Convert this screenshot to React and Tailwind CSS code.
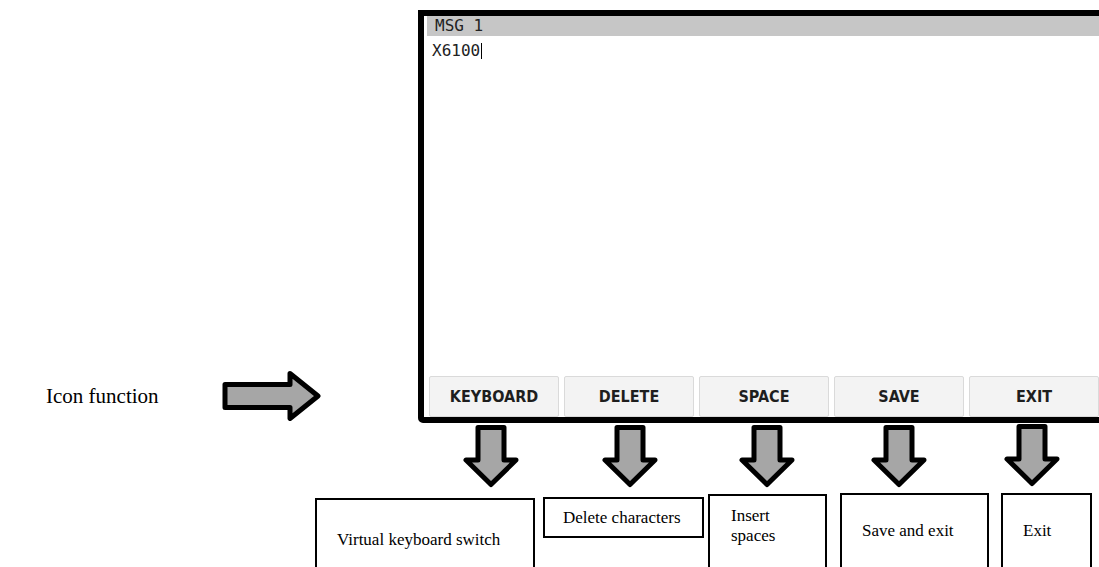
import React from "react";

function DownArrow({ className = "" }) {
  return (
    <svg width="60" height="63" viewBox="0 0 60 63" className={className}>
      <polygon
        points="17,2.5 43,2.5 43,35 55,35 30,59.5 5,35 17,35"
        fill="#a6a6a6"
        stroke="#000"
        strokeWidth="5"
        strokeLinejoin="round"
      />
    </svg>
  );
}

function RightArrow() {
  return (
    <svg width="100" height="50" viewBox="0 0 100 50">
      <polygon
        points="3,13.5 68,13.5 68,2.5 96,25 68,47.5 68,36.5 3,36.5"
        fill="#a6a6a6"
        stroke="#000"
        strokeWidth="5"
        strokeLinejoin="round"
      />
    </svg>
  );
}

const buttons = ["KEYBOARD", "DELETE", "SPACE", "SAVE", "EXIT"];

export default function App() {
  return (
    <div className="w-[1099px] h-[567px] overflow-hidden bg-white font-['Liberation_Serif',serif] text-black">
      {/* top area */}
      <div className="flex h-[423px]">
        <div className="w-[418px] shrink-0 flex items-end pb-[2px]">
          <div className="flex items-center">
            <span className="ml-[46px] text-[21px] leading-[24px]">Icon function</span>
            <span className="ml-[63px]">
              <RightArrow />
            </span>
          </div>
        </div>
        <div className="mt-[10px] w-[690px] h-[413px] shrink-0 border-[6px] border-black rounded-bl-[5px] flex flex-col">
          <div className="ml-[3px] h-[20px] bg-[#c6c6c6] pl-[8px] font-['DejaVu_Sans_Mono',monospace] text-[16px] leading-[20px] text-[#222] whitespace-pre">
            MSG 1
          </div>
          <div className="mt-[5px] pl-[8px] h-[20px] flex items-center font-['DejaVu_Sans_Mono',monospace] text-[16px] leading-[20px] text-[#222]">
            <span>X6100</span>
            <span className="ml-[1px] w-px h-[16px] bg-black" />
          </div>
          <div className="mt-auto flex gap-[5px] pl-[5px] h-[41px]">
            {buttons.map((b) => (
              <div
                key={b}
                className="w-[130px] shrink-0 bg-[#f3f3f3] border border-[#dadada] rounded-[2px] flex items-center justify-center font-['DejaVu_Sans_Condensed','DejaVu_Sans',sans-serif] font-bold text-[16px] text-[#1e1e1e]"
              >
                {b}
              </div>
            ))}
          </div>
        </div>
      </div>

      {/* arrows row */}
      <div className="flex h-[64px] items-start">
        <DownArrow className="ml-[461px] mt-[2px] shrink-0" />
        <DownArrow className="ml-[79px] mt-[2px] shrink-0" />
        <DownArrow className="ml-[77px] mt-[2px] shrink-0" />
        <DownArrow className="ml-[72px] mt-[2px] shrink-0" />
        <DownArrow className="ml-[73px] mt-[1px] shrink-0" />
      </div>

      {/* description boxes */}
      <div className="flex items-start text-[17px] leading-[20px]">
        <div className="ml-[315px] mt-[11px] w-[220px] h-[90px] shrink-0 border-2 border-black pl-[20px] pt-[30px]">
          Virtual keyboard switch
        </div>
        <div className="ml-[8px] mt-[10px] w-[161px] h-[41px] shrink-0 border-2 border-black pl-[18px] pt-[9px]">
          Delete characters
        </div>
        <div className="ml-[4px] mt-[7px] w-[119px] h-[90px] shrink-0 border-2 border-black pl-[21px] pt-[10px]">
          Insert
          <br />
          spaces
        </div>
        <div className="ml-[13px] mt-[6px] w-[149px] h-[90px] shrink-0 border-2 border-black pl-[20px] pt-[26px]">
          Save and exit
        </div>
        <div className="ml-[12px] mt-[6px] w-[91px] h-[90px] shrink-0 border-2 border-black pl-[20px] pt-[26px]">
          Exit
        </div>
      </div>
    </div>
  );
}
